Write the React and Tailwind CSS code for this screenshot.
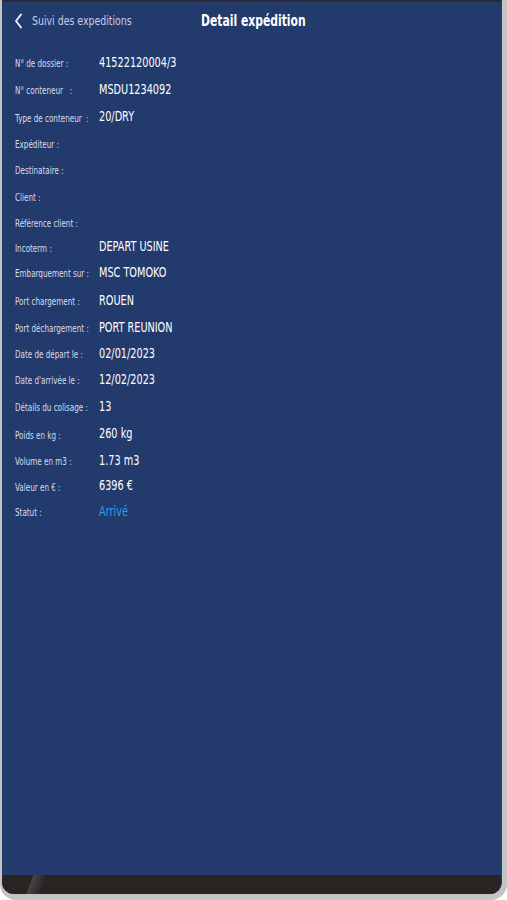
import React from 'react';

const NARROW = { fontFamily: '"Liberation Sans Narrow", "DejaVu Sans Condensed", "Liberation Sans", sans-serif' };

const ROWS = [
  { label: 'N° de dossier :', value: '41522120004/3', h: 'h-[26px]' },
  { label: 'N° conteneur   :', value: 'MSDU1234092', h: 'h-[28px]' },
  { label: 'Type de conteneur  :', value: '20/DRY', h: 'h-[27px]' },
  { label: 'Expéditeur :', value: '', h: 'h-[25px]' },
  { label: 'Destinataire :', value: '', h: 'h-[28px]' },
  { label: 'Client :', value: '', h: 'h-[26px]' },
  { label: 'Référence client :', value: '', h: 'h-[26px]' },
  { label: 'Incoterm :', value: 'DEPART USINE', h: 'h-[23px]' },
  { label: 'Embarquement sur :', value: 'MSC TOMOKO', h: 'h-[28px]' },
  { label: 'Port chargement :', value: 'ROUEN', h: 'h-[28px]' },
  { label: 'Port déchargement :', value: 'PORT REUNION', h: 'h-[26px]' },
  { label: 'Date de départ le :', value: '02/01/2023', h: 'h-[26px]' },
  { label: "Date d'arrivée le :", value: '12/02/2023', h: 'h-[26px]' },
  { label: 'Détails du colisage :', value: '13', h: 'h-[28px]' },
  { label: 'Poids en kg :', value: '260 kg', h: 'h-[27px]' },
  { label: 'Volume en m3 :', value: '1.73 m3', h: 'h-[26px]' },
  { label: 'Valeur en € :', value: '6396 €', h: 'h-[25px]' },
  { label: 'Statut :', value: 'Arrivé', h: 'h-[26px]', status: true },
];

const Row = ({ row }) => (
  <div className={`flex items-center ${row.h}`}>
    <div className="w-[84px] shrink-0">
      <span className="inline-block whitespace-pre text-[10px] text-[#d9dcea] scale-x-[0.8] origin-left">{row.label}</span>
    </div>
    <span className={`inline-block whitespace-pre text-[13.5px] scale-x-[0.8] origin-left ${row.status ? 'text-[#2b9fe4]' : 'text-white'}`}>{row.value}</span>
  </div>
);

export default function App() {
  return (
    <div className="w-[507px] h-[900px] bg-[#c4c4c4] pl-[2px] pr-[5px] pb-[6px] rounded-b-[16px]" style={NARROW}>
      <div className="h-full flex flex-col bg-[#233a6d] border-t-2 border-[#2b2b38] rounded-b-[12px] overflow-hidden border-r border-r-[#3a3f55]">
        {/* Header */}
        <div className="relative h-[38px] flex items-center">
          <div className="flex items-center pl-[12px] gap-[9px] text-[12px] text-[#c9cde3]">
            <svg width="9" height="16" viewBox="0 0 9 16" fill="none">
              <path d="M7 1.5 L2 8 L7 14.5" stroke="#e8ebf5" strokeWidth="2" strokeLinecap="round" strokeLinejoin="round" />
            </svg>
            <span className="inline-block whitespace-pre scale-x-[0.87] origin-left">Suivi des expeditions</span>
          </div>
          <span className="absolute left-[199px] inline-block whitespace-pre text-[15px] font-bold text-white scale-x-[0.8] origin-left">Detail expédition</span>
        </div>

        {/* Details */}
        <div className="pl-[13px] pt-[9px] flex-1">
          {ROWS.map(r => <Row key={r.label} row={r} />)}
        </div>

        {/* Bottom bar */}
        <div className="h-[19px] bg-[#2b2222] relative">
          <div className="absolute left-[28px] top-0 h-full w-[14px] bg-gradient-to-r from-[#4a4444] to-transparent skew-x-[-20deg]" />
        </div>
      </div>
    </div>
  );
}
